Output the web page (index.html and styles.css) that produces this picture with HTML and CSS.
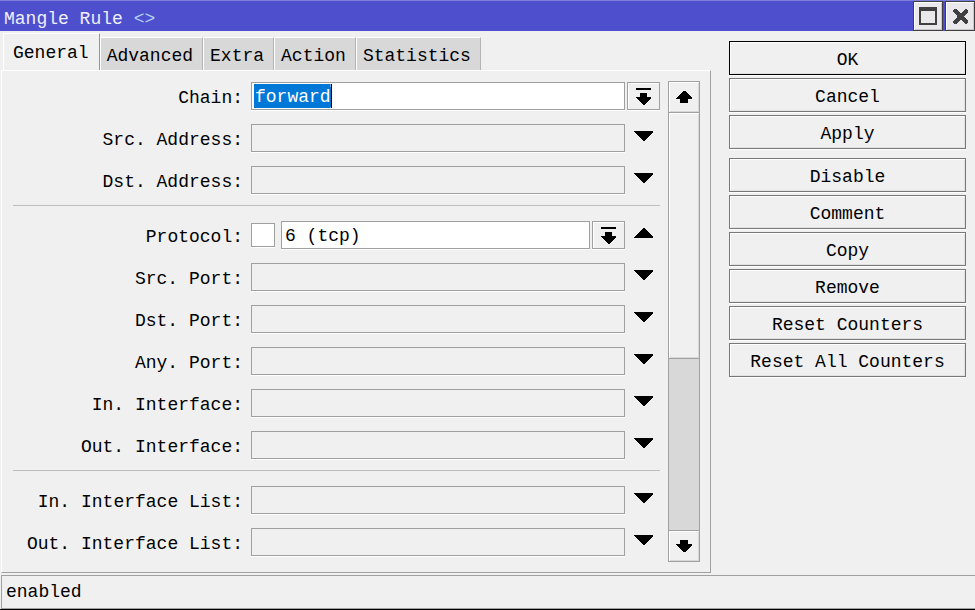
FILE: index.html
```html
<!DOCTYPE html>
<html lang="en">
<head>
<meta charset="utf-8">
<title>Mangle Rule</title>
<link rel="stylesheet" href="styles.css">
</head>
<body>
<svg class="defs" aria-hidden="true">
  <symbol id="down" viewBox="0 0 19 10"><path d="M0 0H19V1L10 10H9L0 1Z"/></symbol>
  <symbol id="up" viewBox="0 0 19 10"><path d="M0 10H19V9L10 0H9L0 9Z"/></symbol>
  <symbol id="drop" viewBox="0 0 15 17"><path d="M0 0H15V2H0ZM4 5H11V9H15V10L8 17H7L0 10V9H4Z"/></symbol>
  <symbol id="scroll-up" viewBox="0 0 16 12"><path d="M7 0H9L16 7V8H12V12H4V8H0V7Z"/></symbol>
  <symbol id="scroll-down" viewBox="0 0 16 12"><path d="M7 12H9L16 5V4H12V0H4V4H0V5Z"/></symbol>
</svg>
<div class="window">
  <header class="titlebar">
    <h1 class="title">Mangle Rule <span class="brackets">&lt;&gt;</span></h1>
    <div class="window-buttons">
      <button class="window-button" type="button" aria-label="Maximize"><svg width="18" height="18"><path d="M0 0H18V18H0ZM2 4V16H16V4Z" fill-rule="evenodd"/></svg></button>
      <button class="window-button" type="button" aria-label="Close"><svg width="15" height="15"><path d="M0 1H1V0H3L7 4H8L12 0H14V1H15V3L11 7V8L15 12V14H14V15H12L8 11H7L3 15H1V14H0V12L4 8V7L0 3Z"/></svg></button>
    </div>
  </header>
  <form class="content">
    <div class="main">
      <div class="tabs" role="tablist">
        <button class="tab active" type="button" role="tab" aria-selected="true">General</button>
        <button class="tab" type="button" role="tab">Advanced</button>
        <button class="tab" type="button" role="tab">Extra</button>
        <button class="tab" type="button" role="tab">Action</button>
        <button class="tab" type="button" role="tab">Statistics</button>
      </div>
      <div class="panel">
        <div class="fields">
          <div class="group">
            <div class="row"><label for="chain">Chain:</label><input class="box filled selected" id="chain" value="forward"><button class="drop" type="button" aria-label="Choose chain"><svg width="15" height="17"><use href="#drop"/></svg></button></div>
            <div class="row"><label for="src-address">Src. Address:</label><input class="box" id="src-address"><button class="toggle" type="button" aria-label="Show source address"><svg width="19" height="10"><use href="#down"/></svg></button></div>
            <div class="row"><label for="dst-address">Dst. Address:</label><input class="box" id="dst-address"><button class="toggle" type="button" aria-label="Show destination address"><svg width="19" height="10"><use href="#down"/></svg></button></div>
          </div>
          <div class="group">
            <div class="row"><label for="protocol">Protocol:</label>
              <div class="combo"><input class="check" type="checkbox" aria-label="Negate protocol"><input class="box filled" id="protocol" value="6 (tcp)"><button class="drop" type="button" aria-label="Choose protocol"><svg width="15" height="17"><use href="#drop"/></svg></button></div>
              <button class="toggle" type="button" aria-label="Hide protocol"><svg width="19" height="10"><use href="#up"/></svg></button></div>
            <div class="row"><label for="src-port">Src. Port:</label><input class="box" id="src-port"><button class="toggle" type="button" aria-label="Show source port"><svg width="19" height="10"><use href="#down"/></svg></button></div>
            <div class="row"><label for="dst-port">Dst. Port:</label><input class="box" id="dst-port"><button class="toggle" type="button" aria-label="Show destination port"><svg width="19" height="10"><use href="#down"/></svg></button></div>
            <div class="row"><label for="any-port">Any. Port:</label><input class="box" id="any-port"><button class="toggle" type="button" aria-label="Show any port"><svg width="19" height="10"><use href="#down"/></svg></button></div>
            <div class="row"><label for="in-interface">In. Interface:</label><input class="box" id="in-interface"><button class="toggle" type="button" aria-label="Show in interface"><svg width="19" height="10"><use href="#down"/></svg></button></div>
            <div class="row"><label for="out-interface">Out. Interface:</label><input class="box" id="out-interface"><button class="toggle" type="button" aria-label="Show out interface"><svg width="19" height="10"><use href="#down"/></svg></button></div>
          </div>
          <div class="group">
            <div class="row"><label for="in-list">In. Interface List:</label><input class="box" id="in-list"><button class="toggle" type="button" aria-label="Show in interface list"><svg width="19" height="10"><use href="#down"/></svg></button></div>
            <div class="row"><label for="out-list">Out. Interface List:</label><input class="box" id="out-list"><button class="toggle" type="button" aria-label="Show out interface list"><svg width="19" height="10"><use href="#down"/></svg></button></div>
          </div>
        </div>
        <div class="scrollbar">
          <button class="scroll-button" type="button" aria-label="Scroll up"><svg width="16" height="12"><use href="#scroll-up"/></svg></button>
          <div class="track"><div class="thumb"></div></div>
          <button class="scroll-button" type="button" aria-label="Scroll down"><svg width="16" height="12"><use href="#scroll-down"/></svg></button>
        </div>
      </div>
    </div>
    <div class="actions">
      <div class="action-group">
        <button class="action default" type="button">OK</button>
        <button class="action" type="button">Cancel</button>
        <button class="action" type="button">Apply</button>
      </div>
      <div class="action-group">
        <button class="action" type="button">Disable</button>
        <button class="action" type="button">Comment</button>
        <button class="action" type="button">Copy</button>
        <button class="action" type="button">Remove</button>
        <button class="action" type="button">Reset Counters</button>
        <button class="action" type="button">Reset All Counters</button>
      </div>
    </div>
  </form>
  <footer class="status">enabled</footer>
</div>
<script src="script.js"></script>
</body>
</html>
```
FILE: styles.css
```css
* {
  box-sizing: border-box;
}

body {
  margin: 0;
  background: #f0f0f0;
}

body,
button,
input {
  font-family: "Liberation Mono", monospace;
  font-size: 18px;
  line-height: 24px;
  color: #000;
}

button,
input {
  margin: 0;
  padding: 0;
  border: 0;
  border-radius: 0;
  background: #f0f0f0;
  outline: 0;
}

svg {
  display: block;
  shape-rendering: crispEdges;
}

.defs {
  display: none;
}

.window {
  display: flex;
  flex-direction: column;
  min-height: 100vh;
  border-bottom: 1px solid #000;
}

.titlebar {
  display: flex;
  justify-content: space-between;
  height: 31px;
  border-top: 1px solid #7f80da;
  background: #4d4fcc;
}

.title {
  margin: 0;
  padding: 6px 4px 0;
  font-size: 18px;
  font-weight: 400;
  line-height: 24px;
  color: #f0f0ff;
}

.brackets {
  color: #b4d2f5;
}

.window-buttons {
  display: flex;
  gap: 2px;
}

.window-button {
  display: flex;
  align-items: center;
  justify-content: center;
  width: 30px;
  height: 30px;
  border: 1px solid #404040;
  background: #ebe8eb;
  box-shadow: inset 1px 1px #fff, inset -1px -1px #c8c6c8;
  fill: #404040;
}

.content {
  display: flex;
  flex: 1;
  gap: 18px;
  padding: 2px 9px 2px 1px;
}

.main {
  display: flex;
  flex: 1;
  flex-direction: column;
  min-width: 0;
}

.tabs {
  display: flex;
  align-items: flex-end;
  padding-left: 2px;
}

.tab {
  height: 33px;
  padding: 4px 9px 0 6px;
  border: 1px solid #fff;
  border-right-color: #b4b4b4;
  border-bottom: 0;
  background: #d8d8d8;
}

.tab.active {
  height: 37px;
  padding: 2px 10px 0 9px;
  border-right-color: #969696;
  background: #f0f0f0;
}

.panel {
  display: flex;
  flex: 1;
  gap: 8px;
  padding: 10px 10px 10px 11px;
  border: 1px solid #a0a0a0;
  border-top-color: #fff;
  border-left-color: #fff;
}

.fields {
  flex: 1;
  padding-top: 1px;
}

.group {
  display: grid;
  gap: 14px;
}

.group + .group {
  margin-top: 11px;
  padding-top: 15px;
  border-top: 1px solid #bebebe;
}

.row {
  display: grid;
  grid-template-columns: 230px 1fr 33px;
  height: 28px;
}

.row label {
  padding-top: 4px;
  text-align: right;
}

.box {
  width: 100%;
  min-width: 0;
  height: 28px;
  padding: 2px 3px 0;
  border: 1px solid #a0a0a0;
  box-shadow: 0 1px #fff;
}

.row > .box,
.combo {
  margin: 0 2px 0 8px;
  width: auto;
}

.filled {
  background: #fff;
}

/* Full-height highlight behind the selected word, with the insertion mark at its end */
.selected {
  background:
    linear-gradient(#000, #000) calc(3px + 7ch) 1px / 1px 24px no-repeat,
    linear-gradient(#0078d7, #0078d7) 2px 1px / calc(1px + 7ch) 24px no-repeat,
    #fff;
}

.box::selection {
  background: #0078d7;
  color: #fff;
}

.combo {
  display: grid;
  grid-template-columns: 24px 1fr 33px;
  column-gap: 2px;
}

.combo .box {
  width: auto;
  margin-left: 4px;
}

.check {
  appearance: none;
  width: 24px;
  height: 24px;
  margin-top: 2px;
  border: 1px solid #a0a0a0;
  background: #fff;
  box-shadow: 0 1px #fff;
}

.drop {
  display: flex;
  align-items: flex-start;
  justify-content: center;
  height: 28px;
  padding-top: 5px;
  border: 1px solid #a0a0a0;
  box-shadow: inset 1px 1px #fff, 0 1px #fff;
}

.toggle {
  display: flex;
  justify-content: center;
  padding-top: 7px;
}

.scrollbar {
  display: flex;
  flex-direction: column;
  width: 32px;
  border: 1px solid #a0a0a0;
}

.scroll-button {
  display: flex;
  align-items: center;
  justify-content: center;
  height: 30px;
  box-shadow: inset 1px 1px #fff, inset -1px -1px #d8d8d8;
}

.track {
  flex: 1;
  border: solid #a0a0a0;
  border-width: 1px 0;
  background: #d8d8d8;
}

.thumb {
  height: 59%;
  border-bottom: 1px solid #a0a0a0;
  background: #f0f0f0;
  box-shadow: inset 1px 1px #fff, inset -1px -1px #d8d8d8;
}

.actions {
  display: grid;
  align-content: start;
  gap: 9px;
  width: 237px;
  padding-top: 8px;
}

.action-group {
  display: grid;
  gap: 3px;
}

.action {
  height: 34px;
  padding-top: 3px;
  border: 1px solid #787878;
  box-shadow: inset 1px 1px #fff, inset -1px -1px #e2e2e2, 0 1px #fff;
}

.action.default {
  border-color: #000;
}

.status {
  height: 34px;
  margin-left: 1px;
  padding: 4px 4px 0;
  border: 1px solid #a0a0a0;
  border-right: 0;
}
```
FILE: script.js
```js
const chain = document.getElementById("chain");
chain.focus();
chain.select();
```
